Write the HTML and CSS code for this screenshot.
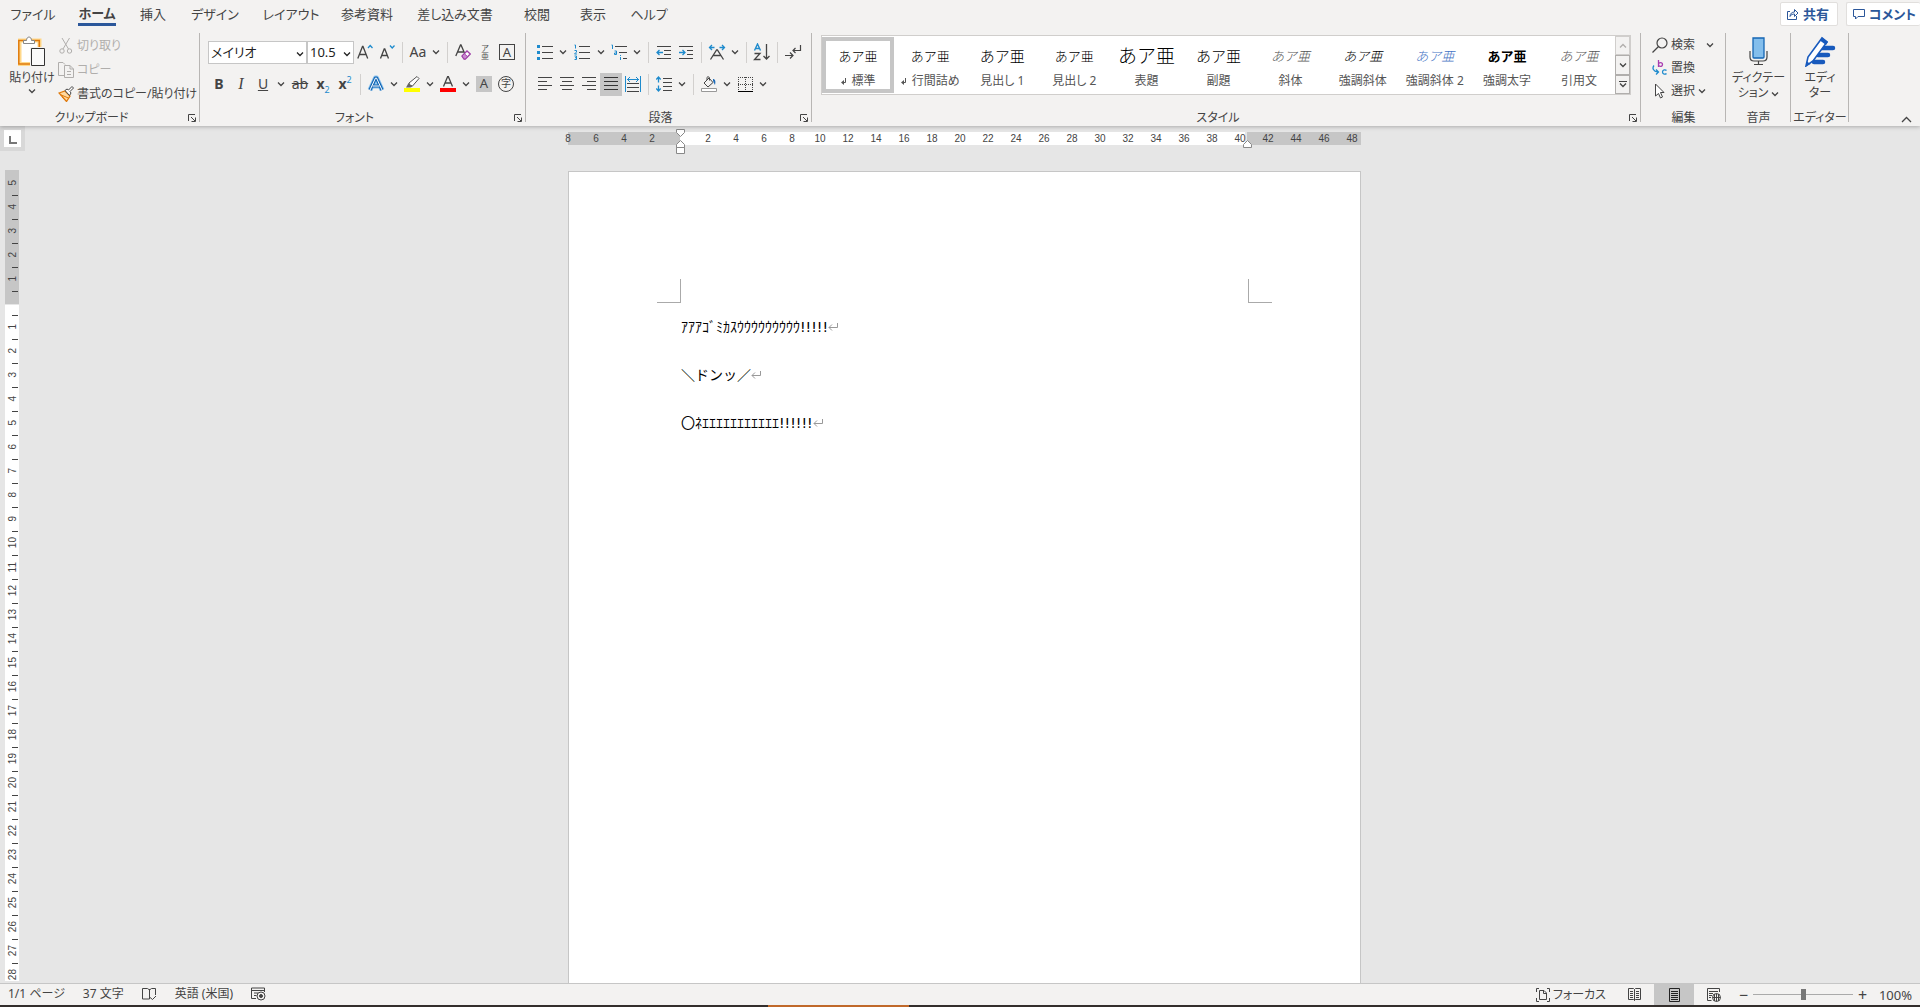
FILE: index.html
```html
<!DOCTYPE html>
<html lang="ja">
<head>
    <meta charset="utf-8">
    <title>文書 1</title>
    <meta name="viewport" content="width=device-width, initial-scale=1">
    <link rel="stylesheet" href="styles.css">
</head>
<body>
    <!-- shared icons -->
    <svg class="symbols" aria-hidden="true">
        <symbol id="caret" viewBox="0 0 8 6"><path d="M1 1.500l3 3 3-3" fill="none" stroke="currentColor" stroke-width="1.300"/></symbol>
        <symbol id="launcher" viewBox="0 0 9 9"><path d="M.5 7V.5H7M3 3l4 4M7.500 3.500V7.500H3.500" fill="none" stroke="currentColor"/></symbol>
        <symbol id="return" viewBox="0 0 10 9"><path d="M9.500 0V4.500H1M4 1.500l-3 3 3 3" fill="none" stroke="currentColor"/></symbol>
        <symbol id="mark" viewBox="0 0 6 7"><path d="M4.500 0V4.500H2" fill="none" stroke="currentColor"/><path d="M0 4.500L3 2v5z" fill="currentColor"/></symbol>
    </svg>

    <header class="ribbon">
        <div class="tab-row">
            <nav class="tabs">
                <button class="tab">ファイル</button>
                <button class="tab active"><span>ホーム</span></button>
                <button class="tab short">挿入</button>
                <button class="tab wide">デザイン</button>
                <button class="tab wide">レイアウト</button>
                <button class="tab wide">参考資料</button>
                <button class="tab widest">差し込み文書</button>
                <button class="tab">校閲</button>
                <button class="tab short">表示</button>
                <button class="tab">ヘルプ</button>
            </nav>
            <div class="tab-actions">
                <button class="pill">
                    <svg width="12" height="12" viewBox="0 0 12 12"><path d="M3 3.500H.5v8h9V8M3 8.500c0-3 2-4.500 4.500-4.500V1.500l3.500 3.500-3.500 3.500V6C5.500 6 4 6.500 3 8.500z" fill="none" stroke="currentColor"/></svg>
                    共有
                </button>
                <button class="pill pill-edge">
                    <svg width="12" height="12" viewBox="0 0 12 12"><path d="M.5 1.500h11v7H5L2.500 11V8.500h-2z" fill="none" stroke="currentColor"/></svg>
                    コメント
                </button>
            </div>
        </div>

        <div class="groups">
            <section class="group clipboard">
                <div class="group-body">
                    <button class="big paste">
                        <svg width="28" height="31" viewBox="0 0 28 31">
                            <path d="M1.500 4.500h20V28h-20z" fill="#fff" stroke="#ffd88a" stroke-width="4"/>
                            <path d="M.8 4.500h20.500V28H.8z" fill="none" stroke="#e07a0c" stroke-width="1.500"/>
                            <path d="M5.500 7.500v-3h3c0-2 1-3.500 2.500-3.500s2.500 1.500 2.500 3.500h3v3z" fill="#fff" stroke="#888"/>
                            <path d="M12 11h16v20H12z" fill="#f3f2f1"/>
                            <path d="M13.500 12.500h13v17h-13z" fill="#fafafa" stroke="#333"/>
                        </svg>
                        <span>貼り付け</span>
                        <svg class="caret"><use href="#caret"/></svg>
                    </button>
                    <div class="rows">
                        <button class="row-btn" disabled>
                            <svg width="16" height="16" viewBox="0 0 16 16" fill="none" stroke="currentColor"><path d="M4 0l6.500 11M11.500 0L5 11"/><circle cx="4" cy="13" r="2.200"/><circle cx="11.500" cy="13" r="2.200"/></svg>
                            切り取り
                        </button>
                        <button class="row-btn" disabled>
                            <svg width="16" height="16" viewBox="0 0 16 16" fill="#f3f2f1" stroke="currentColor"><path d="M6 13.500H.5V.5H5L7 2.500"/><path d="M6.500 3.500H12l3.500 3.500v8.500h-9zM12 3.500V7h3.500M9 9.500h4M9 12.500h4"/></svg>
                            コピー
                        </button>
                        <button class="row-btn">
                            <svg width="16" height="16" viewBox="0 0 16 16"><path d="M1 7l6-2 5 5-3.500 5.500z" fill="#ffd9a0" stroke="#e07a0c" stroke-width="1.300"/><path d="M2 8.500l8.500 3.500M4 11l4 4" stroke="#e07a0c"/><path d="M7 4.500l2-1.500 1.500 1L14 .5l1.500 1.500L12 5.500l1 1.500-1.500 2.500z" fill="#fff" stroke="#444"/></svg>
                            書式のコピー/貼り付け
                        </button>
                    </div>
                </div>
                <h2 class="group-label">クリップボード</h2>
                <button class="launcher" aria-label="クリップボードの設定"><svg><use href="#launcher"/></svg></button>
            </section>

            <section class="group font">
                <div class="group-body tools">
                    <div class="tool-row">
                        <label class="combo combo-font">
                            <select aria-label="フォント"><option>メイリオ</option></select>
                            <svg class="caret"><use href="#caret"/></svg>
                        </label>
                        <label class="combo combo-size">
                            <select aria-label="フォント サイズ"><option>10.5</option></select>
                            <svg class="caret"><use href="#caret"/></svg>
                        </label>
                        <button class="tool" aria-label="フォントの拡大"><svg width="16" height="16" viewBox="0 0 16 16" fill="none" stroke="#444"><path d="M.8 14.500L5.500 2.500h.5l4.700 12M2.500 10.500h6.500" stroke-width="1.300"/><path d="M11 4l2.200-2.500L15.500 4" stroke="#1e8bcd" stroke-width="1.300"/></svg></button>
                        <button class="tool" aria-label="フォントの縮小"><svg width="16" height="16" viewBox="0 0 16 16" fill="none" stroke="#444"><path d="M1.500 14.500L5.200 5h.6l3.700 9.500M3 11.500h5" stroke-width="1.300"/><path d="M11 1.500L13.200 4l2.300-2.500" stroke="#1e8bcd" stroke-width="1.300"/></svg></button>
                        <i class="sep"></i>
                        <button class="tool">Aa</button>
                        <button class="drop" aria-label="文字種の変換"><svg class="caret"><use href="#caret"/></svg></button>
                        <i class="sep"></i>
                        <button class="tool" aria-label="書式のクリア"><svg width="16" height="16" viewBox="0 0 16 16" fill="none"><path d="M.8 12L5.500 1H6l3.500 8M2.500 8h6" stroke="#444" stroke-width="1.300"/><path d="M7 12l5-5 3.300 3-5 5H9z" fill="#fff" stroke="#a040a8" stroke-width="1.300"/><path d="M7 12l2.300-2.300 3.300 3L10.300 15H9z" fill="#c98ad0" stroke="#a040a8"/></svg></button>
                        <button class="tool ruby" aria-label="ルビ"><small>ア</small><small>亜</small></button>
                        <button class="tool" aria-label="囲み線"><span class="boxed">A</span></button>
                    </div>
                    <div class="tool-row">
                        <button class="tool"><b>B</b></button>
                        <button class="tool"><em class="serif">I</em></button>
                        <button class="tool"><u>U</u></button>
                        <button class="drop" aria-label="下線の種類"><svg class="caret"><use href="#caret"/></svg></button>
                        <button class="tool tool-wide"><s>ab</s></button>
                        <button class="tool"><span><b>x</b><sub>2</sub></span></button>
                        <button class="tool"><span><b>x</b><sup>2</sup></span></button>
                        <i class="sep"></i>
                        <button class="tool" aria-label="文字の効果"><svg width="18" height="18" viewBox="0 0 18 18" fill="none" stroke-linejoin="round"><path d="M3 15L8.500 3h1L15 15M5.500 11h7" stroke="#8cc4ee" stroke-width="5"/><path d="M3 15L8.500 3h1L15 15M5.500 11h7" stroke="#1466b4" stroke-width="3.200"/><path d="M3 15L8.500 3h1L15 15M5.500 11h7" stroke="#fff"/></svg></button>
                        <button class="drop" aria-label="文字の効果の種類"><svg class="caret"><use href="#caret"/></svg></button>
                        <button class="tool" aria-label="蛍光ペンの色"><svg width="16" height="16" viewBox="0 0 16 16"><path d="M0 12h16v4H0z" fill="#ff0"/><path d="M5 7l8-6.500 2 2L8.500 10 5.500 9z" fill="#fff" stroke="#555"/><path d="M4.500 7l4 3.500-2 1H2z" fill="#666"/></svg></button>
                        <button class="drop" aria-label="蛍光ペンの色を選択"><svg class="caret"><use href="#caret"/></svg></button>
                        <button class="tool" aria-label="フォントの色"><svg width="16" height="16" viewBox="0 0 16 16"><path d="M0 12h16v4H0z" fill="red"/><path d="M3.500 10.500L7.700.5h.6l4.200 10M5 7h6" fill="none" stroke="#444" stroke-width="1.300"/></svg></button>
                        <button class="drop" aria-label="フォントの色を選択"><svg class="caret"><use href="#caret"/></svg></button>
                        <button class="tool"><span class="shaded">A</span></button>
                        <button class="tool"><span class="circled">字</span></button>
                    </div>
                </div>
                <h2 class="group-label">フォント</h2>
                <button class="launcher" aria-label="フォントの設定"><svg><use href="#launcher"/></svg></button>
            </section>

            <section class="group paragraph">
                <div class="group-body tools">
                    <div class="tool-row">
                        <button class="tool" aria-label="箇条書き"><svg width="16" height="16" viewBox="0 0 16 16"><path d="M5 2.500h11M5 8.500h11M5 14.500h11" stroke="#444"/><path d="M0 1h3v3H0zM0 7h3v3H0zM0 13h3v3H0z" fill="#1e8bcd"/></svg></button>
                        <button class="drop" aria-label="行頭文字"><svg class="caret"><use href="#caret"/></svg></button>
                        <button class="tool tool-wide" aria-label="段落番号"><svg width="16" height="16" viewBox="0 0 16 16" fill="none"><path d="M5 2.500h11M5 8.500h11M5 14.500h11" stroke="#444"/><path d="M.5 1h1v3.500M.5 6.500h2v1.500l-2 2h2.500M.5 12h2v3.500h-2M1 13.700h1.500" stroke="#1e8bcd"/></svg></button>
                        <button class="drop" aria-label="番号書式"><svg class="caret"><use href="#caret"/></svg></button>
                        <button class="tool" aria-label="アウトライン"><svg width="16" height="16" viewBox="0 0 16 16" fill="none"><path d="M4 2.500h12M8 8.500h8M12 14.500h4" stroke="#444"/><path d="M.5 1h1v4M3.500 7h2v3.500h-2V9h2M9.500 13v3M9.500 11v1" stroke="#1e8bcd"/></svg></button>
                        <button class="drop" aria-label="リストの種類"><svg class="caret"><use href="#caret"/></svg></button>
                        <i class="sep"></i>
                        <button class="tool" aria-label="インデントを減らす"><svg width="16" height="16" viewBox="0 0 16 16" fill="none"><path d="M1 2.500h14M8 6.500h7M8 10.500h7M1 14.500h14" stroke="#444"/><path d="M7 8.500H1M3.500 6L1 8.500 3.500 11" stroke="#1e8bcd" stroke-width="1.300"/></svg></button>
                        <button class="tool" aria-label="インデントを増やす"><svg width="16" height="16" viewBox="0 0 16 16" fill="none"><path d="M1 2.500h14M9 6.500h6M9 10.500h6M1 14.500h14" stroke="#444"/><path d="M1 8.500h6M4.500 6L7 8.500 4.500 11" stroke="#1e8bcd" stroke-width="1.300"/></svg></button>
                        <i class="sep"></i>
                        <button class="tool" aria-label="拡張書式"><svg width="18" height="16" viewBox="0 0 18 16" fill="none"><path d="M2.500 15.500L8.600 6h.8l6.100 9.500M5 11.500h8" stroke="#444" stroke-width="1.300"/><path d="M6.500 3.500h-5M4 1L1.500 3.500 4 6M11.500 3.500h5M14 1l2.500 2.500L14 6" stroke="#1e8bcd" stroke-width="1.300"/></svg></button>
                        <button class="drop" aria-label="拡張書式の種類"><svg class="caret"><use href="#caret"/></svg></button>
                        <i class="sep"></i>
                        <button class="tool" aria-label="並べ替え"><svg width="18" height="18" viewBox="0 0 18 18" fill="none"><path d="M1.500 7.500L4.500 1l3 6.500M2.500 5.500h4" stroke="#1e8bcd" stroke-width="1.400"/><path d="M1.500 10.500h5.500l-5.500 6h6M13.500 1v15M10.500 13l3 3 3-3" stroke="#444" stroke-width="1.300"/></svg></button>
                        <i class="sep"></i>
                        <button class="tool" aria-label="編集記号の表示"><svg width="17" height="16" viewBox="0 0 17 16" fill="none" stroke="#444" stroke-width="1.200"><path d="M15.500 1v5.500H8M10.500 4L8 6.500 10.500 9M0 11.500h8M5 8.500l3 3-3 3"/></svg></button>
                    </div>
                    <div class="tool-row">
                        <button class="tool" aria-label="左揃え"><svg width="14" height="14" viewBox="0 0 14 14"><path d="M0 .5h14M0 4.500h9M0 8.500h14M0 12.500h9" stroke="#444"/></svg></button>
                        <button class="tool" aria-label="中央揃え"><svg width="14" height="14" viewBox="0 0 14 14"><path d="M0 .5h14M2 4.500h10M0 8.500h14M2 12.500h10" stroke="#444"/></svg></button>
                        <button class="tool" aria-label="右揃え"><svg width="14" height="14" viewBox="0 0 14 14"><path d="M0 .5h14M5 4.500h9M0 8.500h14M5 12.500h9" stroke="#444"/></svg></button>
                        <button class="tool pressed" aria-label="両端揃え"><svg width="14" height="14" viewBox="0 0 14 14"><path d="M0 .5h14M0 4.500h14M0 8.500h14M0 12.500h14" stroke="#333"/></svg></button>
                        <button class="tool" aria-label="均等割り付け"><svg width="16" height="16" viewBox="0 0 16 16" fill="none"><path d="M2 7.500h12M2 11.500h12M2 15.500h12" stroke="#444"/><path d="M.5 0v16M15.500 0v16M2 3.500h12M5 1L2.500 3.500 5 6M11 1l2.500 2.500L11 6" stroke="#1e8bcd"/></svg></button>
                        <i class="sep"></i>
                        <button class="tool" aria-label="行と段落の間隔"><svg width="16" height="16" viewBox="0 0 16 16" fill="none"><path d="M7 2.500h9M7 6.500h9M7 10.500h9M7 14.500h9" stroke="#444"/><path d="M2.500 1v5.500M.3 3.500L2.500 1l2.200 2.500M2.500 9.500V15M.3 12.500L2.500 15l2.200-2.500" stroke="#1e8bcd" stroke-width="1.300"/></svg></button>
                        <button class="drop" aria-label="行間"><svg class="caret"><use href="#caret"/></svg></button>
                        <i class="sep"></i>
                        <button class="tool" aria-label="塗りつぶし"><svg width="16" height="16" viewBox="0 0 16 16" fill="none"><path d="M.5 12.500h15v3H.5z" fill="#fff" stroke="#999"/><path d="M3 7l5-5 4 4.500-5 4.500zM6 4V1.500C6 .5 8.500.5 8.500 2v2.500" stroke="#444"/><path d="M12 3c2 0 3 2 2 6-1-1-1-3-2-4z" fill="#1e6bb8"/></svg></button>
                        <button class="drop" aria-label="塗りつぶしの色"><svg class="caret"><use href="#caret"/></svg></button>
                        <button class="tool" aria-label="罫線"><svg width="15" height="15" viewBox="0 0 15 15" fill="none"><path d="M0 .5h15M.5 0v14M14.500 0v14M7.500 0v14M0 7.500h15" stroke="#444" stroke-dasharray="1 1"/><path d="M0 14.500h15" stroke="#000"/></svg></button>
                        <button class="drop" aria-label="罫線の種類"><svg class="caret"><use href="#caret"/></svg></button>
                    </div>
                </div>
                <h2 class="group-label">段落</h2>
                <button class="launcher" aria-label="段落の設定"><svg><use href="#launcher"/></svg></button>
            </section>

            <section class="group styles">
                <div class="group-body">
                    <div class="gallery">
                        <button class="style selected"><span class="preview">あア亜</span><span class="name"><svg class="mark"><use href="#mark"/></svg>標準</span></button>
                        <button class="style"><span class="preview">あア亜</span><span class="name"><svg class="mark"><use href="#mark"/></svg>行間詰め</span></button>
                        <button class="style"><span class="preview medium">あア亜</span><span class="name">見出し 1</span></button>
                        <button class="style"><span class="preview">あア亜</span><span class="name">見出し 2</span></button>
                        <button class="style"><span class="preview large">あア亜</span><span class="name">表題</span></button>
                        <button class="style"><span class="preview medium">あア亜</span><span class="name">副題</span></button>
                        <button class="style"><span class="preview italic gray">あア亜</span><span class="name">斜体</span></button>
                        <button class="style"><span class="preview italic">あア亜</span><span class="name">強調斜体</span></button>
                        <button class="style"><span class="preview italic blue">あア亜</span><span class="name">強調斜体 2</span></button>
                        <button class="style"><span class="preview bold">あア亜</span><span class="name">強調太字</span></button>
                        <button class="style"><span class="preview italic gray">あア亜</span><span class="name">引用文</span></button>
                        <div class="gallery-nav">
                            <button disabled aria-label="前の行"><svg class="caret up"><use href="#caret"/></svg></button>
                            <button aria-label="次の行"><svg class="caret"><use href="#caret"/></svg></button>
                            <button class="more" aria-label="その他"><svg class="caret"><use href="#caret"/></svg></button>
                        </div>
                    </div>
                </div>
                <h2 class="group-label">スタイル</h2>
                <button class="launcher" aria-label="スタイルの設定"><svg><use href="#launcher"/></svg></button>
            </section>

            <section class="group editing">
                <div class="group-body">
                    <div class="rows">
                        <button class="row-btn">
                            <svg width="16" height="16" viewBox="0 0 16 16" fill="none" stroke="#444" stroke-width="1.200"><circle cx="10" cy="6" r="5"/><path d="M6.500 9.500L.5 15.500"/></svg>
                            検索
                            <svg class="caret far"><use href="#caret"/></svg>
                        </button>
                        <button class="row-btn">
                            <svg width="16" height="16" viewBox="0 0 16 16" fill="none" stroke-width="1.300"><path d="M6.500 0v7M6.500 4.500c0-2.500 4-2.500 4 0s-4 2.500-4 0" stroke="#a83cb0"/><path d="M14.500 10.500c-1-1-4-1-4 1.500s3 2.500 4 1.500M2 5.500C0 8 1 11.500 6 12M4 9.500L6.500 12 4 14.500" stroke="#1e8bcd"/></svg>
                            置換
                        </button>
                        <button class="row-btn">
                            <svg width="16" height="16" viewBox="0 0 16 16" fill="#fff" stroke="#444"><path d="M3.500 1v12l3-2.500 2 4.500 2-1-2-4.500h3.500z"/></svg>
                            選択
                            <svg class="caret"><use href="#caret"/></svg>
                        </button>
                    </div>
                </div>
                <h2 class="group-label">編集</h2>
            </section>

            <section class="group voice">
                <div class="group-body">
                    <button class="big">
                        <svg width="20" height="31" viewBox="0 0 20 31"><path d="M4 2h11v19q0 1-1 1H5q-1 0-1-1z" fill="#83beec" stroke="#1466b4" stroke-width="1.300"/><path d="M1 15v6q0 4 4 4h9q4 0 4-4v-6M9.500 25v3M5 28.500h9" fill="none" stroke="#444" stroke-width="1.200"/></svg>
                        <span>ディクテー<br>ション <svg class="caret"><use href="#caret"/></svg></span>
                    </button>
                </div>
                <h2 class="group-label">音声</h2>
            </section>

            <section class="group editor">
                <div class="group-body">
                    <button class="big">
                        <svg width="32" height="31" viewBox="0 0 32 31"><path d="M18 12h11M14 19h10M10 26h9" stroke="#185abd" stroke-width="4.500" stroke-linecap="round"/><path d="M2 30l2-9L18 2l5 4L9 25z" fill="#fff" stroke="#185abd" stroke-width="1.600"/><path d="M16 4.500l2-3 6 4.500-2 3zM2 30l1-4.500 3.500 2.500z" fill="#185abd"/></svg>
                        <span>エディ<br>ター</span>
                    </button>
                </div>
                <h2 class="group-label">エディター</h2>
            </section>

            <div class="ribbon-end">
                <button class="collapse" aria-label="リボンを折りたたむ"><svg width="11" height="7" viewBox="0 0 11 7"><path d="M1 6l4.500-4.500L10 6" fill="none" stroke="#444" stroke-width="1.300"/></svg></button>
            </div>
        </div>
    </header>

    <main class="workspace">
        <aside class="side">
            <button class="tab-stop" aria-label="タブの種類"></button>
            <div class="vruler">
                <div class="vruler-margin" id="vruler-margin"></div>
                <div class="vruler-body" id="vruler-body"></div>
            </div>
        </aside>
        <div class="canvas">
            <div class="hruler">
                <div class="hruler-labels" id="hruler"></div>
                <svg class="indent indent-left" width="9" height="25" viewBox="0 0 9 25" fill="#fff" stroke="#888"><path d="M.5.5h8v3l-4 4-4-4zM4.500 11.500l4 4v3h-8v-3zM.5 18.500h8v6h-8z"/></svg>
                <svg class="indent indent-right" width="9" height="8" viewBox="0 0 9 8" fill="#fff" stroke="#888"><path d="M4.500.5l4 4v3h-8v-3z"/></svg>
            </div>
            <article class="page">
                <div class="crops"><i class="crop crop-left"></i><i class="crop crop-right"></i></div>
                <div class="page-text">
                    <p>ｱｱｱｺﾞﾐｶｽｳｳｳｳｳｳｳｳｳ!!!!!<svg class="pilcrow"><use href="#return"/></svg></p>
                    <p>＼ドンッ／<svg class="pilcrow"><use href="#return"/></svg></p>
                    <p>〇ﾈｴｴｴｴｴｴｴｴｴｴｴ!!!!!!<svg class="pilcrow"><use href="#return"/></svg></p>
                </div>
            </article>
        </div>
    </main>

    <footer class="status">
        <div class="status-left">
            <span>1/1 ページ</span>
            <span>37 文字</span>
            <svg width="15" height="14" viewBox="0 0 15 14" fill="none" stroke="#444"><path d="M7.500 2v10M7.500 12H.5V1.500h5l2 1.500 2-1.500h4V8M7.500 10l3 2.500L14 9"/></svg>
            <span>英語 (米国)</span>
            <svg width="15" height="14" viewBox="0 0 15 14" fill="none" stroke="#444"><path d="M5 11.500H.5V1h13v4M.5 3.500h13M3 6h4M3 8.500h2.500"/><circle cx="10" cy="9" r="4"/><circle cx="10" cy="9" r="1.500" fill="#444"/></svg>
        </div>
        <div class="status-right">
            <button class="focus"><svg width="14" height="14" viewBox="0 0 14 14" fill="none" stroke="#444"><path d="M3 .5H.5V4M11 .5h2.500V4M3 13.500H.5V10M11 13.500h2.500V10M3.500 2.500H8l2.500 2.500v6.500h-7zM7.500 2.500v3h3"/></svg>フォーカス</button>
            <button class="view" aria-label="閲覧モード"><svg width="13" height="13" viewBox="0 0 13 13" fill="none" stroke="#444"><path d="M.5.5h5l1 1 1-1h5v11h-5l-1 1-1-1h-5zM6.500 1.500v11M2 3.500h3M2 5.500h3M2 7.500h3M2 9.500h3M8 3.500h3M8 5.500h3M8 7.500h3M8 9.500h3"/></svg></button>
            <button class="view on" aria-label="印刷レイアウト"><svg width="11" height="14" viewBox="0 0 11 14" fill="none" stroke="#222"><path d="M.5.5h10v13H.5zM2 3.500h7M2 5.500h7M2 7.500h7M2 9.500h7M2 11.500h7"/></svg></button>
            <button class="view" aria-label="Web レイアウト"><svg width="14" height="14" viewBox="0 0 14 14" fill="none" stroke="#444"><path d="M4.500 12.500H.5V.5h12V4M2 3.500h9M2 5.500h4M2 7.500h3M2 9.500h2"/><circle cx="9.500" cy="9.500" r="4"/><path d="M5.500 9.500h8M9.500 5.500v8M7.500 6v7M11.500 6v7"/></svg></button>
            <button class="zoom-btn" aria-label="縮小">−</button>
            <input class="zoom" type="range" min="0" max="200" value="100" aria-label="ズーム">
            <button class="zoom-btn" aria-label="拡大">+</button>
            <span class="percent">100%</span>
        </div>
    </footer>
    <div class="taskbar"><i></i></div>

    <script src="script.js"></script>
</body>
</html>
```
FILE: styles.css
```css
* {
    box-sizing: border-box;
}
body {
    margin: 0;
    height: 100vh;
    display: flex;
    flex-direction: column;
    overflow: hidden;
    background: #e6e6e6;
    color: #444;
    font: 12px/16px "Noto Sans", "Noto Sans CJK JP", sans-serif;
    font-feature-settings: "palt";
}
button, select {
    font: inherit;
    font-feature-settings: inherit;
    color: inherit;
    background: none;
    border: none;
    padding: 0;
    margin: 0;
}
button {
    white-space: nowrap;
}
svg {
    flex: none;
}
.symbols {
    position: absolute;
    width: 0;
    height: 0;
}
.caret {
    width: 8px;
    height: 6px;
}
.caret.up {
    transform: rotate(180deg);
}

/* ribbon */
.ribbon {
    position: relative;
    z-index: 2;
    flex: none;
    background: #f3f2f1;
    box-shadow: 0 1px 4px rgba(0,0,0,0.25);
}
.tab-row {
    display: flex;
    justify-content: space-between;
    height: 33px;
    font-size: 13px;
}
.tabs {
    display: flex;
    height: 28px;
    padding-left: 1px;
}
.tab {
    width: 64px;
}
.tab.short {
    width: 48px;
}
.tab.wide {
    width: 76px;
}
.tab.widest {
    width: 100px;
}
.tab.active {
    font-weight: bold;
}
.tab.active span {
    display: inline-block;
    height: 24px;
    padding-top: 3px;
    border-bottom: 3px solid #2b579a;
}
.tab-actions {
    display: flex;
    align-items: flex-start;
    gap: 8px;
    padding-top: 2px;
}
.pill {
    display: flex;
    align-items: center;
    gap: 4px;
    height: 24px;
    padding: 0 8px 0 6px;
    background: #fff;
    border: 1px solid #e1dfdd;
    border-radius: 2px;
    color: #2b579a;
    font-weight: bold;
}
.pill-edge {
    padding-right: 4px;
    border-right: none;
}
.groups {
    display: flex;
    height: 93px;
}
.group {
    position: relative;
    flex: none;
    display: flex;
    flex-direction: column;
}
.group::after {
    content: "";
    position: absolute;
    top: 0;
    right: 0;
    width: 1px;
    height: 89px;
    background: #b8b6b4;
}
.clipboard { width: 200px; }
.font { width: 326px; }
.paragraph { width: 286px; }
.styles { flex: 1; min-width: 0; }
.editing { width: 85px; }
.voice { width: 65px; }
.editor { width: 58px; }
.group-body {
    display: flex;
    height: 77px;
}
.group-label {
    margin: 0;
    font-size: 12px;
    font-weight: normal;
    text-align: center;
}
.clipboard .group-label,
.font .group-label,
.paragraph .group-label,
.styles .group-label {
    padding-right: 17px;
}
.launcher {
    position: absolute;
    right: 3px;
    bottom: 3px;
    width: 9px;
    height: 9px;
    display: flex;
}
.launcher svg {
    width: 9px;
    height: 9px;
}
.big {
    width: 100%;
    display: flex;
    flex-direction: column;
    align-items: center;
    gap: 3px;
    padding-top: 3px;
    line-height: 15px;
}
.paste {
    flex: none;
    width: 58px;
    padding-left: 6px;
}
.rows {
    display: flex;
    flex-direction: column;
}
.clipboard .rows {
    padding-top: 1px;
}
.row-btn {
    display: flex;
    align-items: center;
    gap: 3px;
    height: 24px;
}
.row-btn:disabled {
    color: #b0aeac;
}
.editing .rows {
    padding-left: 11px;
}
.editing .row-btn {
    height: 23px;
}
.far {
    margin-left: 8px;
}

/* tool buttons */
.tools {
    flex-direction: column;
    padding: 3px 0 0 8px;
}
.tool-row {
    display: flex;
    align-items: center;
    height: 32px;
}
.tool, .drop {
    display: flex;
    align-items: center;
    justify-content: center;
    width: 22px;
    height: 23px;
    font-size: 14px;
}
.tool-wide {
    width: 24px;
}
.drop {
    width: 14px;
}
.pressed {
    background: #c6c6c6;
}
.sep {
    width: 1px;
    height: 21px;
    margin: 0 4px;
    background: #d2d0ce;
}
.combo {
    position: relative;
    display: flex;
    height: 23px;
    background: #fff;
    border: 1px solid #c6c6c6;
    color: #222;
    font-size: 13px;
}
.combo select {
    appearance: none;
    width: 100%;
    padding-left: 2px;
}
.combo .caret {
    position: absolute;
    top: 9px;
    right: 2px;
    pointer-events: none;
}
.combo-font {
    width: 99px;
}
.combo-size {
    width: 47px;
}
.ruby {
    flex-direction: column;
    color: #555;
}
.ruby small {
    font-size: 8px;
    line-height: 8px;
}
.boxed, .shaded, .circled {
    width: 16px;
    height: 16px;
    line-height: 15px;
    font-size: 13px;
}
.boxed {
    border: 1px solid #444;
    line-height: 14px;
}
.shaded {
    background: #c6c6c6;
}
.circled {
    border: 1px solid #444;
    border-radius: 50%;
    font-size: 10px;
    line-height: 13px;
}
.serif {
    font-family: "Liberation Serif", serif;
    font-size: 16px;
}
sub, sup {
    font-size: 9px;
    line-height: 1px;
    color: #1e8bcd;
}

/* style gallery */
.gallery {
    flex: 1;
    display: flex;
    height: 60px;
    margin: 2px 10px 0 9px;
    background: #fff;
    border: 1px solid #d0cecc;
    overflow: hidden;
}
.style {
    flex: 1;
    min-width: 0;
    display: flex;
    flex-direction: column;
    align-items: center;
    justify-content: space-between;
    margin: 1px 0;
    padding-top: 3px;
    border: 4px solid transparent;
}
.style.selected {
    border-color: #c6c6c6;
}
.preview {
    height: 24px;
    line-height: 24px;
    font-size: 13px;
    font-weight: 300;
    font-feature-settings: normal;
    color: #000;
}
.medium { font-size: 15px; }
.large { font-size: 19px; }
.bold { font-weight: bold; }
.italic { font-style: italic; }
.gray { color: #555; }
.blue { color: #4472c4; }
.name {
    display: flex;
    align-items: center;
    gap: 5px;
    color: #555;
    white-space: pre;
}
.mark {
    width: 6px;
    height: 7px;
}
.gallery-nav {
    flex: none;
    display: flex;
    flex-direction: column;
    width: 15px;
    background: #f3f2f1;
}
.gallery-nav button {
    flex: 1;
    display: flex;
    align-items: center;
    justify-content: center;
    border: 1px solid #b0aeac;
}
.gallery-nav button:disabled {
    border-color: #d0cecc;
    color: #b0aeac;
}
.more .caret {
    border-top: 1px solid #444;
    height: 7px;
}
.ribbon-end {
    flex: none;
    display: flex;
    align-items: flex-end;
    justify-content: flex-end;
    width: 71px;
    padding: 0 8px 3px 0;
}
.collapse {
    display: flex;
}

/* workspace */
.workspace {
    flex: 1;
    display: flex;
    min-height: 0;
}
.side {
    flex: none;
    width: 25px;
}
.tab-stop {
    position: relative;
    display: block;
    width: 25px;
    height: 25px;
    background: #fff;
    border: 4px solid #d8d8d8;
}
.tab-stop::after {
    content: "";
    position: absolute;
    left: 5px;
    bottom: 3px;
    width: 6px;
    height: 6px;
    border: solid #777;
    border-width: 0 0 2px 2px;
}
.vruler {
    width: 14px;
    margin: 19px 0 0 5px;
    font: 10px/12px "Liberation Sans", sans-serif;
}
.vruler-margin {
    padding: 7px 0 7px 2px;
    background: #c6c6c6;
}
.vruler-body {
    margin-top: 1px;
    padding: 4px 0 0 2px;
    background: #fff;
}
.vmark {
    display: flex;
    align-items: center;
    justify-content: center;
    height: 12px;
}
.vmark span {
    writing-mode: vertical-rl;
    transform: rotate(180deg);
}
.vmark.tick::after {
    content: "";
    width: 6px;
    height: 1px;
    margin-left: 4px;
    background: #444;
}
.canvas {
    flex: 1;
    display: flex;
    flex-direction: column;
    align-items: center;
    padding: 6px 16px 0 0;
}
.hruler {
    position: relative;
    flex: none;
    width: 793px;
    height: 13px;
    background: linear-gradient(to right, #c6c6c6 112px, #fff 112px, #fff 677px, #e6e6e6 677px, #e6e6e6 679px, #c6c6c6 679px);
    font: 10px/13px "Liberation Sans", sans-serif;
}
.hruler-labels {
    display: flex;
    margin: 0 -14px;
}
.hruler-labels span {
    flex: none;
    width: 28px;
    text-align: center;
}
.indent {
    position: absolute;
}
.indent-left {
    left: 108px;
    top: -3px;
}
.indent-right {
    left: 675px;
    top: 8px;
}
.page {
    flex: 1;
    width: 793px;
    margin-top: 26px;
    padding: 107px 112px 0;
    background: #fff;
    border: 1px solid #c6c6c6;
    border-bottom: none;
}
.crops {
    display: flex;
    justify-content: space-between;
    margin: 0 -24px;
}
.crop {
    width: 24px;
    height: 24px;
    border: 0 solid #aaa;
    border-bottom-width: 1px;
}
.crop-left { border-right-width: 1px; }
.crop-right { border-left-width: 1px; }
.page-text {
    color: #000;
    font: 14px/48px "DejaVu Sans", "Noto Sans CJK JP", sans-serif;
    font-feature-settings: normal;
}
.page-text p {
    margin: 0;
}
.pilcrow {
    width: 10px;
    height: 9px;
    color: #999;
}

/* status bar */
.status {
    flex: none;
    display: flex;
    justify-content: space-between;
    height: 22px;
    background: #f3f2f1;
    border-top: 1px solid #c6c6c6;
}
.status-left, .status-right {
    display: flex;
    align-items: center;
}
.status-left {
    gap: 18px;
    padding: 0 0 1px 8px;
}
.status-right {
    padding-right: 8px;
}
.focus {
    display: flex;
    align-items: center;
    gap: 3px;
    margin-right: 8px;
}
.view {
    display: flex;
    align-items: center;
    justify-content: center;
    width: 40px;
    height: 100%;
}
.view.on {
    background: #c6c6c6;
}
.zoom-btn {
    width: 19px;
    font-size: 16px;
}
.zoom {
    appearance: none;
    width: 100px;
    height: 12px;
    margin: 0;
    background: linear-gradient(#aaa, #aaa) center / 100% 1px no-repeat;
}
.zoom::-webkit-slider-thumb {
    appearance: none;
    width: 5px;
    height: 11px;
    background: #777;
}
.percent {
    width: 40px;
    font-size: 13px;
    text-align: right;
}
.taskbar {
    flex: none;
    display: flex;
    height: 2px;
    background: #332e2c;
}
.taskbar i {
    width: 141px;
    margin-left: 40%;
    background: #c0692a;
}
```
FILE: script.js
```js
function addMark(parent, text) {
    const mark = document.createElement('div');
    mark.className = text ? 'vmark' : 'vmark tick';
    if (text) {
        const label = document.createElement('span');
        label.textContent = text;
        mark.appendChild(label);
    }
    parent.appendChild(mark);
}

// Vertical ruler: margin counts down, body counts up
const margin = document.getElementById('vruler-margin');
for (let i = 5; i > 0; i--) {
    addMark(margin, String(i));
    addMark(margin, '');
}
const body = document.getElementById('vruler-body');
for (let i = 1; i <= 28; i++) {
    addMark(body, '');
    addMark(body, String(i));
}

// Horizontal ruler, every second character
const hruler = document.getElementById('hruler');
for (let i = -8; i <= 48; i += 2) {
    const label = document.createElement('span');
    label.textContent = i === 0 ? '' : Math.abs(i);
    hruler.appendChild(label);
}
```
